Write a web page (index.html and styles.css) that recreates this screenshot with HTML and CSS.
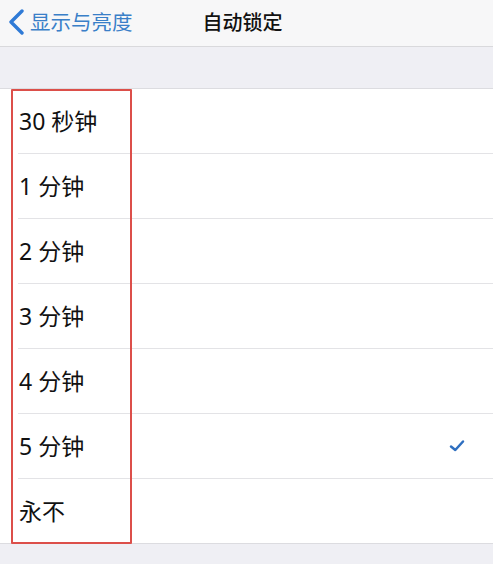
FILE: index.html
```html
<!DOCTYPE html>
<html lang="zh">
<head>
<meta charset="utf-8">
<link rel="stylesheet" href="styles.css">
</head>
<body>
<div class="page">
  <header class="nav">
    <div class="back">
      <svg class="chev" width="17" height="26" viewBox="0 0 17 26"><path d="M14 2 L3 13 L14 24" fill="none" stroke="#2f7ad6" stroke-width="3.4" stroke-linecap="round" stroke-linejoin="round"/></svg>
      <span class="back-text">显示与亮度</span>
    </div>
    <div class="title">自动锁定</div>
  </header>
  <div class="gap"></div>
  <div class="list">
    <div class="row"><span class="label">30 秒钟</span></div>
    <div class="row"><span class="label">1 分钟</span></div>
    <div class="row"><span class="label">2 分钟</span></div>
    <div class="row"><span class="label">3 分钟</span></div>
    <div class="row"><span class="label">4 分钟</span></div>
    <div class="row"><span class="label">5 分钟</span>
      <svg class="check" width="16" height="14" viewBox="0 0 16 14"><path d="M2 7.5 L6.3 11 L14 2.5" fill="none" stroke="#2f6fc0" stroke-width="2.5" stroke-linecap="round" stroke-linejoin="round"/></svg>
    </div>
    <div class="row last"><span class="label">永不</span></div>
    <div class="highlight"></div>
  </div>
  <div class="footer"></div>
</div>
</body>
</html>
```
FILE: styles.css
```css
* { box-sizing: border-box; }
html, body { margin: 0; padding: 0; }
body {
  width: 493px;
  height: 564px;
  overflow: hidden;
  background: #efeff4;
  font-family: "Noto Sans", "Noto Sans CJK SC", sans-serif;
  color: #111;
}
.page { display: flex; flex-direction: column; height: 564px; }
.nav {
  height: 47px;
  background: #f7f7f8;
  border-bottom: 1px solid #d9d9dc;
  display: flex;
  align-items: center;
}
.back {
  display: flex;
  align-items: center;
  padding-left: 8px;
  gap: 5px;
}
.chev { display: block; margin-top: -2px; }
.back-text {
  font-family: "Noto Sans CJK SC", sans-serif;
  font-size: 20.5px;
  color: #3a7fc8;
  line-height: 1;
  margin-top: -3px;
}
.title {
  margin-left: 70px;
  font-family: "Noto Sans CJK SC", sans-serif;
  font-size: 20px;
  font-weight: 500;
  color: #111;
  line-height: 1;
  margin-top: -3px;
}
.gap { height: 42px; background: #efeff4; border-bottom: 1px solid #dcdce0; }
.list {
  background: #fff;
  position: relative;
  border-bottom: 1px solid #dcdce0;
}
.row {
  height: 65px;
  margin-left: 18px;
  padding-right: 28px;
  border-bottom: 1px solid #e3e3e6;
  display: flex;
  align-items: center;
  justify-content: space-between;
}
.row.last { border-bottom: none; height: 64px; }
.label {
  font-size: 23px;
  line-height: 1;
  margin-left: 1px;
  color: #111;
}
.check { display: block; }
.highlight {
  position: absolute;
  left: 11px;
  top: 0;
  width: 121px;
  height: 455px;
  border: 2px solid #dc4f4a;
  border-radius: 1px;
  pointer-events: none;
}
.footer { flex: 1; background: #efeff4; }
```
